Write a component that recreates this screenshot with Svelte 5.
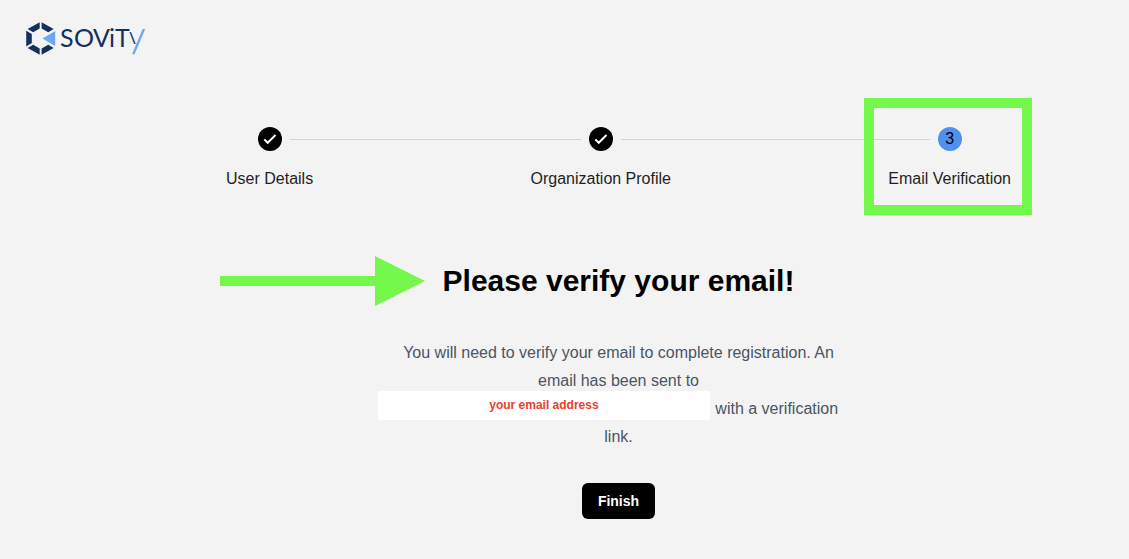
<script>
  const steps = [
    { label: 'User Details', done: true },
    { label: 'Organization Profile', done: true },
    { label: 'Email Verification', done: false }
  ];
</script>

<div class="page">
  <header>
    <svg class="logo" width="120" height="33" viewBox="26 22 120 33" role="img" aria-label="sovity">
      <g fill="#14305f">
        <path d="M39.700 22.300V28.600L33.200 32.300L27.600 29.100Z" />
        <path d="M41.600 22.300L53.700 29.100L48.200 32.300L41.600 28.600Z" />
        <path d="M26.200 30.700L31.800 33.900V43.100L26.200 46.400Z" />
        <path d="M27.600 48L33.200 44.800L39.700 48.500V54.800Z" />
        <path d="M41.600 54.800V48.500L48.200 44.800L53.700 48Z" />
      </g>
      <path fill="#6ea6f8" d="M42.500 38.500L55.200 31V46Z" />
      <g class="wordmark" aria-hidden="true">
        <text y="47"><tspan x="60">S</tspan><tspan x="74">O</tspan><tspan x="93">V</tspan><tspan x="109">i</tspan><tspan x="115">T</tspan></text>
        <text class="arm" x="129" y="43">\</text>
      </g>
      <path fill="#6ea6f8" d="M142.600 29H145.200L134.600 54.300H132Z" />
    </svg>
  </header>

  <main>
    <ol class="steps">
      {#each steps as step, i}
        {#if i > 0}
          <li class="connector" aria-hidden="true"></li>
        {/if}
        <li class="step" aria-current={step.done ? undefined : 'step'}>
          <div class="marker">
            <span class="rule" class:hidden={i === 0}></span>
            <span class="circle" class:current={!step.done}>
              {#if step.done}
                <svg width="24" height="24" viewBox="0 0 24 24" aria-hidden="true">
                  <path d="M6.300 12.400L9.700 15.800L17.500 8" fill="none" stroke="#fff" stroke-width="2" />
                </svg>
              {:else}
                {i + 1}
              {/if}
            </span>
            <span class="rule" class:hidden={i === steps.length - 1}></span>
          </div>
          <span class="label">{step.label}</span>
          {#if !step.done}
            <span class="highlight" aria-hidden="true"></span>
          {/if}
        </li>
      {/each}
    </ol>

    <section>
      <h1>
        <svg class="arrow" width="206" height="50" viewBox="0 0 206 50" aria-hidden="true">
          <path d="M0 20H155V0L205 25L155 50V30H0Z" fill="#73f84b" />
        </svg>
        Please verify your email!
      </h1>
      <p>
        You will need to verify your email to complete registration. An email has been sent to
        <span class="address"><span class="cover">your email address</span></span> with a verification link.
      </p>
      <button type="button">Finish</button>
    </section>
  </main>
</div>

<style>
  :global(body) {
    margin: 0;
    background: #f3f3f3;
  }
  .page {
    font-family: 'Liberation Sans', Arial, sans-serif;
    font-size: 16px;
    color: #1f1f1f;
  }
  header {
    padding: 22px 26px 0;
  }
  .logo {
    display: block;
  }
  .wordmark {
    font-family: Lato, sans-serif;
    font-size: 25px;
    fill: #14305f;
  }
  .arm {
    font-size: 15px;
    font-weight: bold;
  }
  main {
    padding: 72px 118px 40px 226px;
  }
  .steps {
    display: flex;
    margin: 0;
    padding: 0;
    list-style: none;
  }
  .step {
    position: relative;
    display: flex;
    flex-direction: column;
    gap: 16px;
  }
  .marker {
    display: flex;
    align-items: center;
    gap: 8px;
  }
  .rule {
    flex: 1;
    height: 1px;
    background: #d4d4d4;
  }
  .hidden {
    visibility: hidden;
  }
  .connector {
    flex: 1;
    height: 1px;
    margin-top: 12px;
    background: #d4d4d4;
  }
  .circle {
    width: 24px;
    height: 24px;
    border-radius: 50%;
    background: #000;
    color: #000;
    line-height: 24px;
    text-align: center;
  }
  .circle.current {
    background: #4f91ec;
  }
  .circle svg {
    display: block;
  }
  .label {
    line-height: 24px;
    white-space: nowrap;
  }
  .highlight {
    position: absolute;
    inset: -29px -21px -24px -24px;
    border: 10px solid #73f84b;
  }
  section {
    display: flex;
    flex-direction: column;
    align-items: center;
    padding-top: 72px;
  }
  h1 {
    position: relative;
    margin: 0;
    font-size: 30px;
    line-height: 36px;
    color: #000;
  }
  .arrow {
    position: absolute;
    right: 100%;
    top: -7px;
    margin-right: 17px;
  }
  p {
    max-width: 448px;
    margin: 40px 0 32px;
    line-height: 28px;
    text-align: center;
    color: #4b5563;
  }
  .address {
    position: relative;
    display: inline-block;
    width: 312px;
    height: 28px;
    vertical-align: top;
  }
  .cover {
    position: absolute;
    inset: -4px 1px 3px -21px;
    background: #fff;
    color: #e8412c;
    font-size: 12px;
    font-weight: bold;
  }
  button {
    padding: 8px 16px;
    border: 0;
    border-radius: 6px;
    background: #000;
    color: #fff;
    font: bold 14px/20px 'Liberation Sans', Arial, sans-serif;
  }
</style>
